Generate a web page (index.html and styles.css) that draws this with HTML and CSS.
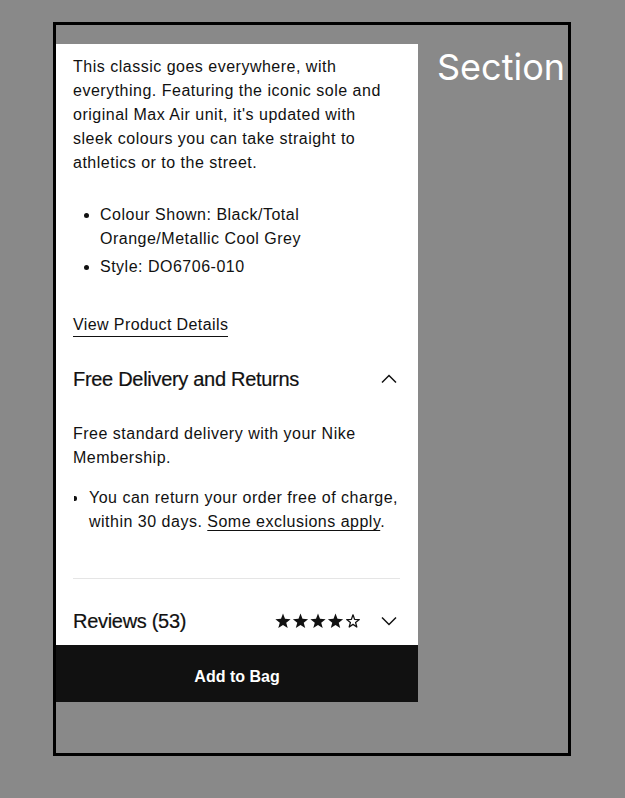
FILE: index.html
```html
<!DOCTYPE html>
<html lang="en">
<head>
<meta charset="utf-8">
<title>Product Section</title>
<link rel="stylesheet" href="styles.css">
</head>
<body>
<div class="frame">
  <div class="card">
    <div class="content">
      <p class="desc">This classic goes everywhere, with everything. Featuring the iconic sole and original Max Air unit, it's updated with sleek colours you can take straight to athletics or to the street.</p>
      <ul class="specs">
        <li>Colour Shown: Black/Total Orange/Metallic Cool Grey</li>
        <li>Style: DO6706-010</li>
      </ul>
      <a class="details-link" href="#">View Product Details</a>

      <div class="acc-head">
        <span class="acc-title">Free Delivery and Returns</span>
        <svg class="chev" width="16" height="16" viewBox="0 0 16 16"><path d="M1 11.5 L8 4.5 L15 11.5" fill="none" stroke="#111" stroke-width="1.5"/></svg>
      </div>
      <div class="acc-body">
        <p>Free standard delivery with your Nike Membership.</p>
        <ul class="returns">
          <li>You can return your order free of charge, within 30 days. <a href="#">Some exclusions apply</a>.</li>
        </ul>
      </div>
      <hr class="divider">
      <div class="acc-head reviews">
        <span class="acc-title">Reviews (53)</span>
        <span class="right">
          <span class="stars">
            <svg width="86" height="16" viewBox="0 0 86 16">
              <g fill="#111">
                <path d="M8 0.6 L10 5.85 L15.61 6.13 L11.23 9.65 L12.7 15.07 L8 12 L3.3 15.07 L4.77 9.65 L0.39 6.13 L6 5.85 Z"/>
                <path transform="translate(17.5 0)" d="M8 0.6 L10 5.85 L15.61 6.13 L11.23 9.65 L12.7 15.07 L8 12 L3.3 15.07 L4.77 9.65 L0.39 6.13 L6 5.85 Z"/>
                <path transform="translate(35 0)" d="M8 0.6 L10 5.85 L15.61 6.13 L11.23 9.65 L12.7 15.07 L8 12 L3.3 15.07 L4.77 9.65 L0.39 6.13 L6 5.85 Z"/>
                <path transform="translate(52.5 0)" d="M8 0.6 L10 5.85 L15.61 6.13 L11.23 9.65 L12.7 15.07 L8 12 L3.3 15.07 L4.77 9.65 L0.39 6.13 L6 5.85 Z"/>
              </g>
              <path transform="translate(70 0)" d="M8 1.8 L9.6 6.4 L14.3 6.6 L10.6 9.6 L11.8 14 L8 11.4 L4.2 14 L5.4 9.6 L1.7 6.6 L6.4 6.4 Z" fill="none" stroke="#111" stroke-width="1.3" stroke-linejoin="round"/>
            </svg>
          </span>
          <svg class="chev" width="16" height="16" viewBox="0 0 16 16"><path d="M1 4.5 L8 11.5 L15 4.5" fill="none" stroke="#111" stroke-width="1.5"/></svg>
        </span>
      </div>
    </div>
    <button class="add-btn" type="button">Add to Bag</button>
  </div>
  <div class="section-label">Section</div>
</div>
</body>
</html>
```

FILE: styles.css
```css
html, body {
  margin: 0;
  padding: 0;
}
body {
  background: #898989;
  font-family: "Liberation Sans", Arial, sans-serif;
  color: #111;
}
.frame {
  box-sizing: border-box;
  margin: 22px 0 0 53px;
  width: 518px;
  height: 734px;
  border: 3px solid #000;
  display: flex;
  align-items: flex-start;
}
.card {
  flex: none;
  margin-top: 19px;
  width: 362px;
  height: 658px;
  background: #fff;
  display: flex;
  flex-direction: column;
  overflow: hidden;
}
.content {
  flex: 1;
  overflow: hidden;
  padding: 11px 18px 0 17px;
  font-size: 16px;
  line-height: 24px;
  letter-spacing: 0.5px;
}
.desc {
  margin: 0;
}
.specs {
  margin: 28px 0 0;
  padding-left: 27px;
}
.specs li {
  margin-bottom: 4px;
}
.specs li:last-child {
  margin-bottom: 0;
}
.details-link {
  display: inline-block;
  margin-top: 35px;
  color: #111;
  font-weight: 500;
  letter-spacing: 0.4px;
  text-decoration: none;
  border-bottom: 1.5px solid #111;
  line-height: 22px;
}
.acc-head {
  display: flex;
  align-items: center;
  justify-content: space-between;
  height: 40px;
  margin-top: 22px;
  letter-spacing: 0;
}
.acc-title {
  font-size: 20px;
  letter-spacing: -0.3px;
  -webkit-text-stroke: 0.2px #111;
}
.chev {
  display: block;
  margin-right: 3px;
}
.acc-body {
  margin-top: 23px;
}
.acc-body p {
  margin: 0;
}
.returns {
  margin: 16px 0 0;
  padding-left: 16px;
  list-style: none;
}
.returns li {
  position: relative;
}
.returns li::before {
  content: "";
  position: absolute;
  left: -15px;
  top: 10px;
  width: 3px;
  height: 5px;
  background: #111;
  border-radius: 0 2px 2px 0;
}
.returns a {
  color: #111;
  text-decoration: underline;
  text-underline-offset: 3px;
}
.divider {
  border: 0;
  border-top: 1px solid #e5e5e5;
  margin: 44px 0 0;
}
.reviews {
  margin-top: 22px;
}
.right {
  display: flex;
  align-items: center;
  gap: 20px;
}
.stars svg {
  display: block;
}
.add-btn {
  flex: none;
  height: 57px;
  border: 0;
  background: #111;
  color: #fff;
  font-family: "Liberation Sans", Arial, sans-serif;
  font-weight: 700;
  font-size: 16px;
  padding: 6px 0 0;
}
.section-label {
  margin: 19px 0 0 19px;
  color: #fff;
  font-family: Inter, "Liberation Sans", sans-serif;
  font-size: 36px;
  line-height: 46px;
}
```
